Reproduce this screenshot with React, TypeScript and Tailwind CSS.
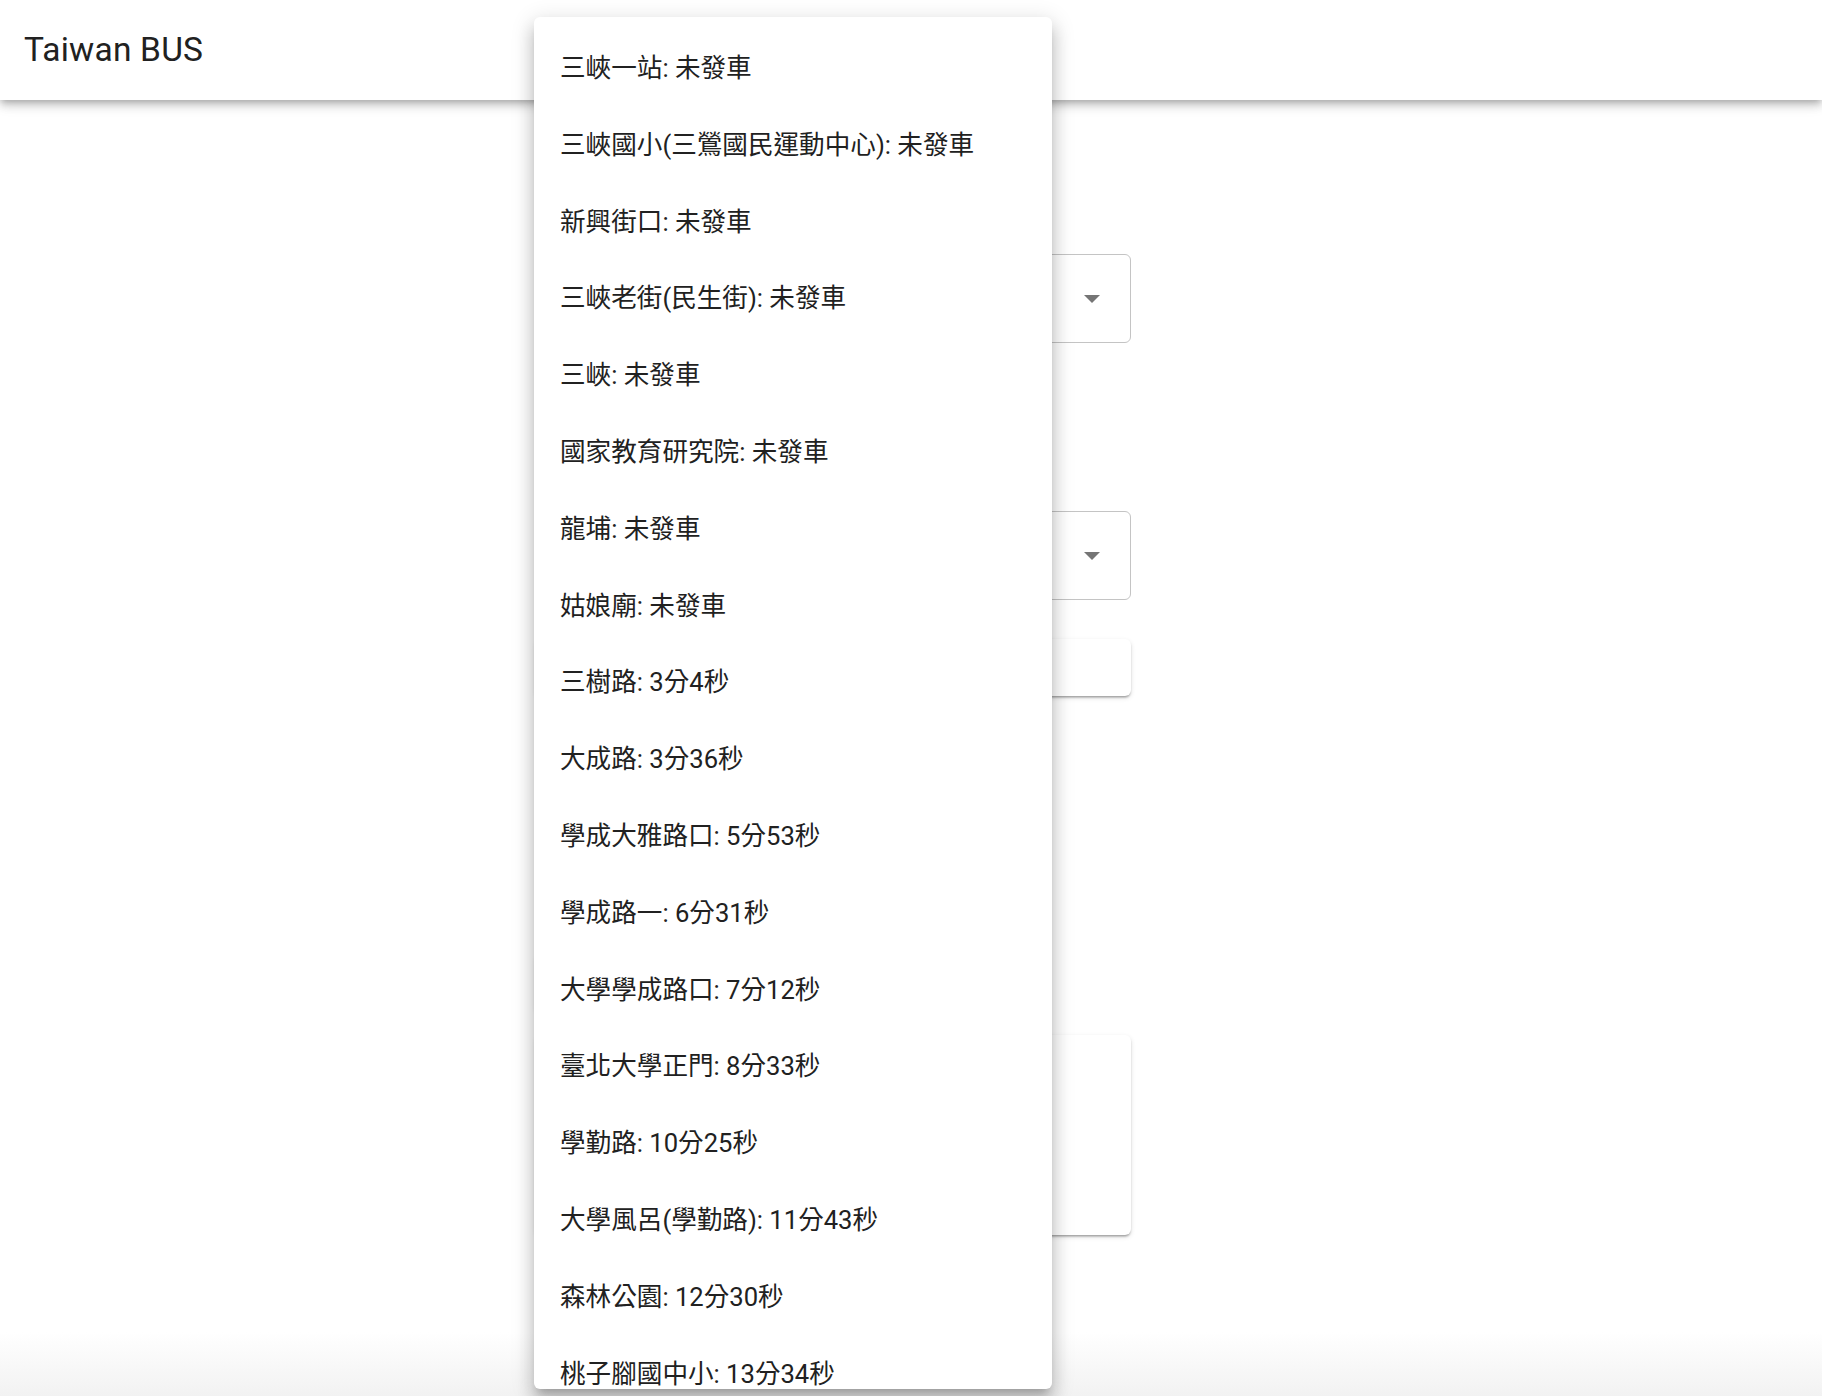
import React from 'react';

const stops = [
  '三峽一站: 未發車',
  '三峽國小(三鶯國民運動中心): 未發車',
  '新興街口: 未發車',
  '三峽老街(民生街): 未發車',
  '三峽: 未發車',
  '國家教育研究院: 未發車',
  '龍埔: 未發車',
  '姑娘廟: 未發車',
  '三樹路: 3分4秒',
  '大成路: 3分36秒',
  '學成大雅路口: 5分53秒',
  '學成路一: 6分31秒',
  '大學學成路口: 7分12秒',
  '臺北大學正門: 8分33秒',
  '學勤路: 10分25秒',
  '大學風呂(學勤路): 11分43秒',
  '森林公園: 12分30秒',
  '桃子腳國中小: 13分34秒',
];

const ArrowDrop = () => (
  <svg width="16" height="8" viewBox="0 0 16 8">
    <path d="M0 0 L16 0 L8 8 Z" fill="#757575" />
  </svg>
);

function OutlinedSelect() {
  return (
    <div className="h-[89px] w-full rounded-[6px] border border-[#c4c4c4] flex items-center justify-end pr-[30px]">
      <ArrowDrop />
    </div>
  );
}

export default function App() {
  return (
    <div className="relative h-[1396px] flex flex-col bg-white overflow-hidden font-['Roboto','Noto_Sans_CJK_TC',sans-serif] text-[#212121]">
      {/* App bar */}
      <header className="relative z-10 h-[100px] shrink-0 bg-white flex items-center pl-[24px] shadow-[0px_3px_6px_-2px_rgba(0,0,0,0.2),0px_6px_8px_0px_rgba(0,0,0,0.14),0px_2px_16px_0px_rgba(0,0,0,0.12)]">
        <h1 className="text-[33.5px] font-normal tracking-[0.2px] leading-none">Taiwan BUS</h1>
      </header>

      {/* Form behind the open menu */}
      <main className="ml-[536px] w-[595px] pt-[154px] flex flex-col">
        <OutlinedSelect />
        <div className="mt-[168px]">
          <OutlinedSelect />
        </div>
        <div className="mt-[39px] h-[57px] rounded-[6px] bg-white shadow-[0px_3px_2px_-2px_rgba(0,0,0,0.2),0px_2px_2px_0px_rgba(0,0,0,0.14),0px_2px_5px_0px_rgba(0,0,0,0.12)]" />
        <div className="mt-[258px] h-[58px] w-[470px] rounded-[6px] bg-white shadow-[0px_3px_2px_-2px_rgba(0,0,0,0.2),0px_2px_2px_0px_rgba(0,0,0,0.14),0px_2px_5px_0px_rgba(0,0,0,0.12)]" />
        <div className="mt-[23px] h-[200px] rounded-[6px] bg-white shadow-[0px_3px_2px_-2px_rgba(0,0,0,0.2),0px_2px_2px_0px_rgba(0,0,0,0.14),0px_2px_5px_0px_rgba(0,0,0,0.12)]" />
      </main>

      <div className="mt-auto h-[64px] shrink-0 bg-gradient-to-b from-white to-[#f2f2f2]" />

      {/* Open stop menu */}
      <div className="absolute z-20 left-[534px] top-[17px] w-[518px] h-[1372px] bg-white rounded-[6px] overflow-hidden pt-[12.8px] shadow-[0px_8px_8px_-5px_rgba(0,0,0,0.2),0px_13px_16px_2px_rgba(0,0,0,0.14),0px_5px_22px_3px_rgba(0,0,0,0.12)]">
        {stops.map((s) => (
          <div key={s} className="h-[76.8px] px-[26px] flex items-center text-[25.6px] whitespace-nowrap">
            {s}
          </div>
        ))}
      </div>
    </div>
  );
}
